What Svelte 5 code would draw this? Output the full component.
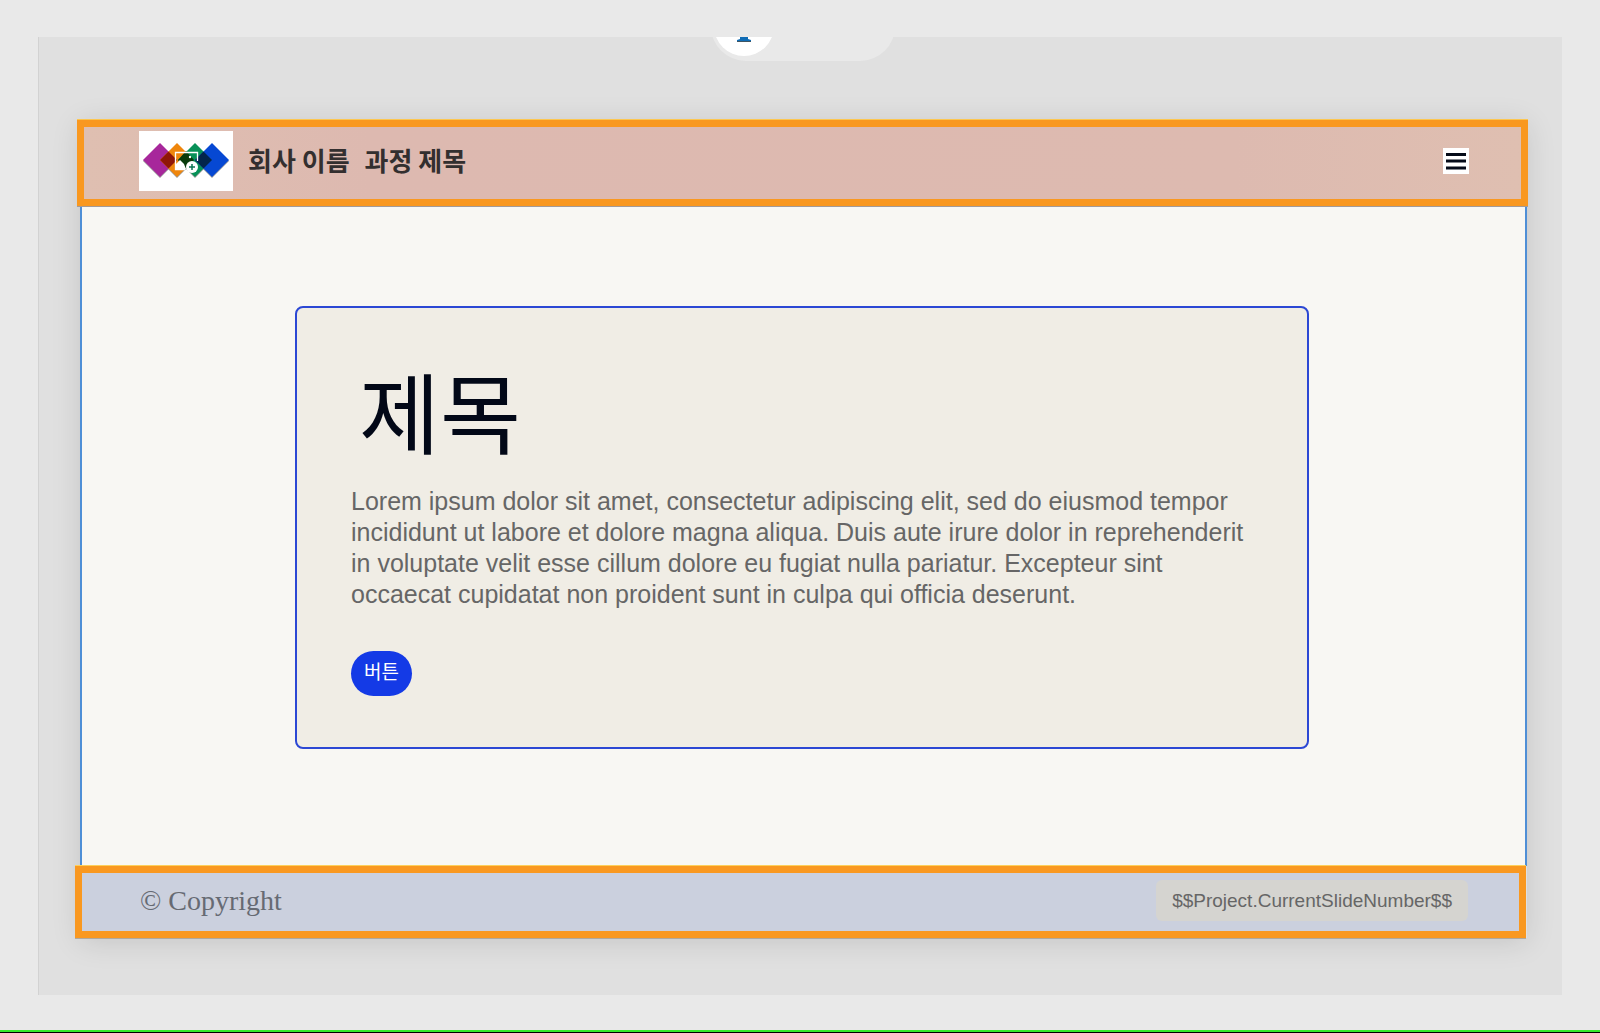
<script>
	let menuOpen = false;
	const company = '회사 이름';
	const course = '과정 제목';
	const slideNumber = '$$Project.CurrentSlideNumber$$';
</script>

<div class="page">
	<div class="stage">
		<div class="device">
			<span class="knob">
				<svg width="14" height="5" viewBox="0 0 14 5" aria-hidden="true">
					<path d="M3 0h8v2l3 1v2H0V3l3-1z" fill="#0f6cb5" />
					<path d="M0 4h14v1H0z" fill="#3f5562" />
				</svg>
			</span>
		</div>

		<div class="slide">
			<header>
				<svg class="logo" viewBox="0 0 94 60" role="img" aria-label="logo">
					<rect width="94" height="60" fill="#fff" />
					<g class="shade">
						<path d="M21 13l17 17-17 17L4 30z" />
						<path d="M38 13l17 17-17 17-17-17z" />
						<path d="M56 13l17 17-17 17-17-17z" />
						<path d="M73 13l17 17-17 17-17-17z" />
					</g>
					<path d="M21 12l17 17-17 17L4 29z" fill="#a7279b" />
					<path d="M38 12l17 17-17 17-17-17z" fill="#ef860c" />
					<path d="M56 12l17 17-17 17-17-17z" fill="#089158" />
					<path d="M73 12l17 17-17 17-17-17z" fill="#0648d3" />
					<path d="M29.500 20.500l8.500 8.500-8.500 8.500-8.500-8.500z" fill="#8f1608" />
					<path d="M47 20l8 9-8 9-8-9z" fill="#083b0a" />
					<path d="M64.500 20.500l8.500 8.500-8.500 8.500-8.500-8.500z" fill="#03254b" />
					<path d="M46 38.500h-9.500v-17h22V30" fill="none" stroke="#fff" stroke-width="1.300" />
					<path d="M37 38v-5l4-4 4 4 2 5z" fill="#fff" />
					<circle cx="51" cy="26" r="1.200" fill="#fff" />
					<circle cx="53" cy="36" r="6" fill="#fff" />
					<path d="M53 33v6M50 36h6" stroke="#0b7350" stroke-width="1.500" />
				</svg>
				<span class="name">{company}</span>
				<span class="name">{course}</span>
				<button class="menu" aria-label="menu" aria-expanded={menuOpen} on:click={() => (menuOpen = !menuOpen)}>
					<svg width="26" height="26" viewBox="0 0 26 26" aria-hidden="true">
						<path d="M3 6.500h20M3 13h20M3 20h20" stroke="#050b18" stroke-width="3" />
					</svg>
				</button>
			</header>

			<main>
				<section class="card">
					<h1>제목</h1>
					<p>
						Lorem ipsum dolor sit amet, consectetur adipiscing elit, sed do eiusmod tempor
						incididunt ut labore et dolore magna aliqua. Duis aute irure dolor in reprehenderit
						in voluptate velit esse cillum dolore eu fugiat nulla pariatur. Excepteur sint
						occaecat cupidatat non proident sunt in culpa qui officia deserunt.
					</p>
					<button class="action">버튼</button>
				</section>
			</main>

			<footer>
				<span class="copyright">© Copyright</span>
				<span class="number">{slideNumber}</span>
			</footer>
		</div>
	</div>
	<div class="line"></div>
</div>

<style>
	:global(body) {
		margin: 0;
		background-color: #e9e9e9;
	}
	* {
		box-sizing: border-box;
	}
	.page {
		padding-top: 37px;
		font-family: "Liberation Sans", "Noto Sans CJK KR", sans-serif;
	}
	.stage {
		position: relative;
		overflow: hidden;
		margin: 0 38px 35px;
		padding: 83px 35px 57px 41px;
		border-left: 1px solid #d2d2d2;
		background-color: #e0e0e0;
	}
	/* toolbar pill, cut off by the top of the stage */
	.device {
		position: absolute;
		top: -46px;
		left: 50%;
		width: 184px;
		height: 70px;
		margin-left: -90px;
		padding: 5px 3px;
		border-radius: 35px;
		background-color: #e9e9e9;
	}
	.knob {
		display: flex;
		justify-content: center;
		width: 60px;
		height: 60px;
		padding-top: 41px;
		border-radius: 50%;
		background-color: #fff;
	}
	.slide {
		box-shadow: 0 4px 28px rgba(0, 0, 0, 0.12);
	}
	header {
		position: relative;
		display: flex;
		align-items: center;
		gap: 15px;
		margin: 0 -1px 0 -3px;
		padding: 4px 52px 8px 55px;
		border: 7px solid #f99820;
		box-shadow: 0 1px 0 #a39b98, 0 -1px 0 #fcc650;
		background: linear-gradient(90deg, #dfbfb1, #ddb9b0 20%, #ddbab0 80%, #dfbfb1);
	}
	.logo {
		width: 94px;
		height: 60px;
	}
	.shade {
		fill: #555;
		opacity: 0.6;
	}
	.name {
		padding-bottom: 3px;
		color: #332f2f;
		font-family: "Noto Sans CJK KR", sans-serif;
		font-size: 26px;
		font-weight: 700;
		line-height: 36px;
	}
	.menu {
		display: flex;
		margin-left: auto;
		padding: 0;
		border: none;
		background-color: #fff;
		cursor: pointer;
	}
	main {
		padding: 100px 216px 117px 213px;
		border: 2px solid #4f8fd6;
		border-width: 0 2px;
		background-color: #f8f7f3;
	}
	.card {
		padding: 48px 54px 51px 54px;
		border: 2px solid #2c48d4;
		border-radius: 8px;
		background-color: #f0ede5;
	}
	h1 {
		margin: 0 0 24px;
		padding-left: 8px;
		color: #020817;
		font-family: "Noto Sans CJK KR", sans-serif;
		font-size: 88px;
		font-weight: 400;
		line-height: 106px;
	}
	p {
		margin: 0 0 41px;
		color: #666;
		font-size: 25px;
		line-height: 31px;
	}
	.action {
		display: block;
		height: 45px;
		padding: 0 13px 6px;
		border: none;
		border-radius: 23px;
		background-color: #143ae6;
		color: #fff;
		font-family: "Noto Sans CJK KR", sans-serif;
		font-size: 19px;
		font-weight: 400;
		cursor: pointer;
	}
	footer {
		position: relative;
		display: flex;
		align-items: center;
		justify-content: space-between;
		margin: 0 1px 0 -5px;
		padding: 7px 51px 10px 58px;
		border: 7px solid #f99820;
		box-shadow: 0 1px 0 #b0a89c, 0 -1px 0 #fdd05a;
		background-color: #cbd0de;
	}
	.copyright {
		color: #666a73;
		font-family: "Liberation Serif", serif;
		font-size: 28px;
		line-height: 32px;
	}
	.number {
		padding: 0 16px;
		border-radius: 6px;
		background-color: #d5d4d0;
		color: #666;
		font-size: 19px;
		line-height: 41px;
	}
	.line {
		height: 3px;
		border-bottom: 1px solid #000;
		background-color: #35e82b;
	}
</style>
